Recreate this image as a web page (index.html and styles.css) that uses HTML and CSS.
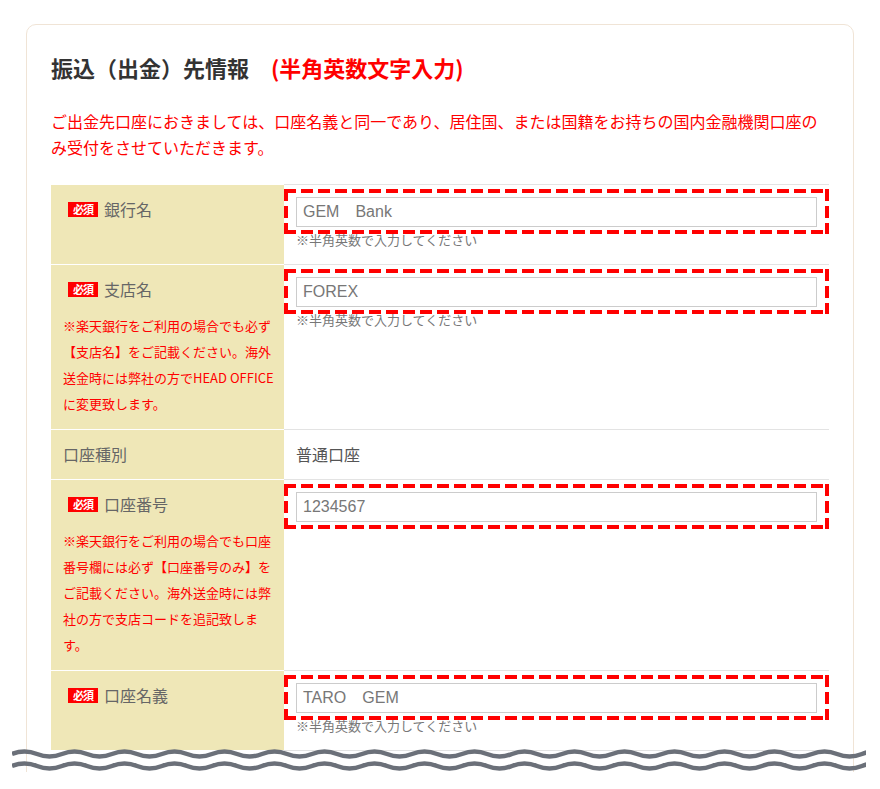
FILE: index.html
```html
<!DOCTYPE html>
<html lang="ja">
<head>
  <meta charset="UTF-8">
  <title>振込（出金）先情報</title>
  <meta name="viewport" content="width=device-width, initial-scale=1.0">
  <link rel="stylesheet" href="styles.css">
</head>
<body>

  <div class="shot">
    <section class="card">
      <h2 class="card-title">振込（出金）先情報<span class="title-note">(半角英数文字入力)</span></h2>

      <p class="lead">ご出金先口座におきましては、口座名義と同一であり、居住国、または国籍をお持ちの国内金融機関口座のみ受付をさせていただきます。</p>

      <table class="form-table">
        <tr>
          <th><span class="req">必須</span>銀行名</th>
          <td>
            <div class="mark"><input type="text" value="GEM　Bank"></div>
            <p class="hint">※半角英数で入力してください</p>
          </td>
        </tr>
        <tr>
          <th>
            <span class="req">必須</span>支店名
            <p class="note">※楽天銀行をご利用の場合でも必ず【支店名】をご記載ください。海外送金時には弊社の方でHEAD OFFICEに変更致します。</p>
          </th>
          <td>
            <div class="mark"><input type="text" value="FOREX"></div>
            <p class="hint">※半角英数で入力してください</p>
          </td>
        </tr>
        <tr>
          <th>口座種別</th>
          <td class="plain">普通口座</td>
        </tr>
        <tr>
          <th>
            <span class="req">必須</span>口座番号
            <p class="note">※楽天銀行をご利用の場合でも口座番号欄には必ず【口座番号のみ】をご記載ください。海外送金時には弊社の方で支店コードを追記致します。</p>
          </th>
          <td>
            <div class="mark"><input type="text" value="1234567"></div>
          </td>
        </tr>
        <tr>
          <th><span class="req">必須</span>口座名義</th>
          <td>
            <div class="mark"><input type="text" value="TARO　GEM"></div>
            <p class="hint">※半角英数で入力してください</p>
          </td>
        </tr>
      </table>
    </section>

    <!-- torn edge of the capture -->
    <svg class="wave" width="854" height="28" viewBox="0 0 854 28">
      <path d="M0 8 q12.5 -5 25 0 t25 0 t25 0 t25 0 t25 0 t25 0 t25 0 t25 0 t25 0 t25 0 t25 0 t25 0 t25 0 t25 0 t25 0 t25 0 t25 0 t25 0 t25 0 t25 0 t25 0 t25 0 t25 0 t25 0 t25 0 t25 0 t25 0 t25 0 t25 0 t25 0 t25 0 t25 0 t25 0 t25 0 t25 0"/>
      <path d="M0 20 q12.5 -5 25 0 t25 0 t25 0 t25 0 t25 0 t25 0 t25 0 t25 0 t25 0 t25 0 t25 0 t25 0 t25 0 t25 0 t25 0 t25 0 t25 0 t25 0 t25 0 t25 0 t25 0 t25 0 t25 0 t25 0 t25 0 t25 0 t25 0 t25 0 t25 0 t25 0 t25 0 t25 0 t25 0 t25 0 t25 0"/>
    </svg>
  </div>

</body>
</html>
```

FILE: styles.css
```css
* { margin: 0; padding: 0; box-sizing: border-box; }
body {
  background: #fff;
  font-family: "Noto Sans CJK JP", "Noto Sans", sans-serif;
  color: #333;
}

.shot {
  position: relative;
  height: 772px;
  overflow: hidden;
}

.card {
  max-width: 828px;
  margin: 24px auto 0;
  padding: 26px 24px 60px;
  background: #fff;
  border: 1px solid #f0e4d6;
  border-radius: 10px;
}

.card-title {
  font-size: 22px;
  line-height: 32px;
  font-weight: bold;
  color: #333;
}

.title-note {
  margin-left: 22px;
  color: #f00;
}

.lead {
  margin-top: 25px;
  font-size: 16px;
  line-height: 26px;
  color: #f00;
}

.form-table {
  width: 100%;
  margin-top: 24px;
  border-collapse: collapse;
}

.form-table th {
  width: 233px;
  padding: 12px 8px 12px 12px;
  background: #efe7b7;
  border-bottom: 1px solid #fff;
  vertical-align: top;
  text-align: left;
  font-size: 16px;
  line-height: 24px;
  font-weight: normal;
  color: #666;
}

.form-table td {
  padding: 4px 0 16px;
  border-top: 1px solid #e3e3e3;
  border-bottom: 1px solid #e3e3e3;
  vertical-align: top;
}

.form-table td.plain {
  padding: 12px 12px 13px;
  font-size: 16px;
  line-height: 24px;
  color: #555;
}

.req {
  display: inline-block;
  width: 30px;
  height: 15px;
  margin: 0 6px 0 5px;
  background: #f00;
  color: #fff;
  font-size: 11px;
  line-height: 15px;
  font-weight: bold;
  text-align: center;
  letter-spacing: -1px;
  vertical-align: 2px;
}

.note {
  margin-top: 12px;
  font-size: 13px;
  line-height: 26px;
  color: #f00;
}

/* red dashed frame: long dashes, drawn with gradients */
.mark {
  padding: 8px 12px 7px;
  background:
    repeating-linear-gradient(90deg, #f00 0 12px, transparent 12px 17px) left top / 100% 4px no-repeat,
    repeating-linear-gradient(90deg, #f00 0 12px, transparent 12px 17px) left bottom / 100% 4px no-repeat,
    repeating-linear-gradient(180deg, #f00 0 12px, transparent 12px 17px) left top / 4px 100% no-repeat,
    repeating-linear-gradient(180deg, #f00 0 12px, transparent 12px 17px) right top / 4px 100% no-repeat;
}

.mark input {
  display: block;
  width: 100%;
  height: 30px;
  padding: 0 6px;
  border: 1px solid #ccc;
  font-family: "Liberation Sans", Arial, sans-serif;
  font-size: 16px;
  color: #777;
  background: #fff;
}

.hint {
  margin: -2px 0 0 12px;
  font-size: 13px;
  line-height: 16px;
  color: #777;
}

.wave {
  position: absolute;
  left: 12px;
  top: 746px;
  fill: none;
  stroke: #6b7079;
  stroke-width: 4.5;
}
```
